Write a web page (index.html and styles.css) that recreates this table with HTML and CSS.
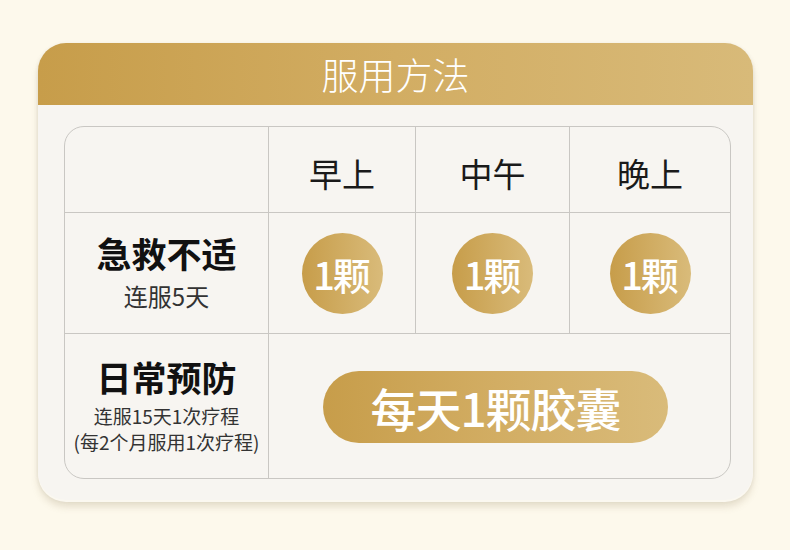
FILE: index.html
```html
<!DOCTYPE html>
<html lang="zh">
<head>
<meta charset="utf-8">
<link rel="stylesheet" href="styles.css">
</head>
<body>
<div class="card">
  <div class="card-head">服用方法</div>
  <div class="card-body">
    <div class="table">
      <div class="cell head"></div>
      <div class="cell head">早上</div>
      <div class="cell head">中午</div>
      <div class="cell head last-col">晚上</div>

      <div class="cell label">
        <div class="label-title">急救不适</div>
        <div class="label-sub big">连服5天</div>
      </div>
      <div class="cell"><div class="dose">1颗</div></div>
      <div class="cell"><div class="dose">1颗</div></div>
      <div class="cell last-col"><div class="dose">1颗</div></div>

      <div class="cell label last-row">
        <div class="label-title">日常预防</div>
        <div class="label-sub first">连服15天1次疗程</div>
        <div class="label-sub">(每2个月服用1次疗程)</div>
      </div>
      <div class="cell span3 last-row last-col"><div class="pill">每天1颗胶囊</div></div>
    </div>
  </div>
</div>
</body>
</html>
```

FILE: styles.css
```css
html, body {
  margin: 0;
  padding: 0;
}
body {
  background: #fdf9ec;
  font-family: "Noto Sans CJK SC", "Noto Sans", sans-serif;
  width: 790px;
  height: 550px;
  overflow: hidden;
}
.card {
  margin: 43px 0 0 38px;
  width: 715px;
  border-radius: 28px;
  background: #f7f5f1;
  box-shadow: 0 2px 0 #fbf8f0, 0 7px 7px rgba(150, 130, 95, 0.22), 0 1px 4px rgba(0, 0, 0, 0.08);
  overflow: hidden;
}
.card-head {
  height: 62px;
  line-height: 62px;
  text-align: center;
  color: #fff;
  font-size: 37px;
  font-weight: 300;
  background: linear-gradient(90deg, #c79d4a 0%, #d2ad63 50%, #d8ba79 100%);
}
.card-body {
  padding: 21px 22px 21px 26px;
}
.table {
  display: grid;
  grid-template-columns: 204px 147px 154px 160px;
  grid-template-rows: 86px 121px 144px;
  border: 1px solid #c9c7c3;
  border-radius: 20px;
  overflow: hidden;
}
.cell {
  box-sizing: border-box;
  border-right: 1px solid #c9c7c3;
  border-bottom: 1px solid #c9c7c3;
  display: flex;
  flex-direction: column;
  align-items: center;
  justify-content: center;
}
.cell.last-col {
  border-right: none;
}
.cell.last-row {
  border-bottom: none;
}
.cell.span3 {
  grid-column: span 3;
}
.head {
  font-size: 33px;
  color: #1a1a1a;
  font-weight: 400;
  padding-top: 6px;
}
.label-title {
  font-size: 35px;
  font-weight: 700;
  color: #111;
  line-height: 44px;
  margin-top: -2px;
}
.label-sub {
  font-size: 19px;
  color: #333;
  line-height: 26px;
}
.label-sub.big {
  font-size: 24px;
  line-height: 34px;
  margin-top: 4px;
}
.label-sub.first {
  margin-top: 4px;
}
.dose {
  width: 81px;
  height: 81px;
  border-radius: 50%;
  background: linear-gradient(90deg, #c79d4a 0%, #d9bb7a 100%);
  color: #fff;
  font-size: 38px;
  font-weight: 500;
  letter-spacing: -2px;
  display: flex;
  align-items: center;
  justify-content: center;
  padding-right: 2px;
  box-sizing: border-box;
}
.pill {
  width: 345px;
  height: 72px;
  margin: 2px 8px 0 0;
  border-radius: 36px;
  background: linear-gradient(90deg, #c79d4a 0%, #d2ad63 50%, #d9bb7a 100%);
  color: #fff;
  font-size: 46px;
  font-weight: 500;
  letter-spacing: -1px;
  display: flex;
  align-items: center;
  justify-content: center;
}
```
